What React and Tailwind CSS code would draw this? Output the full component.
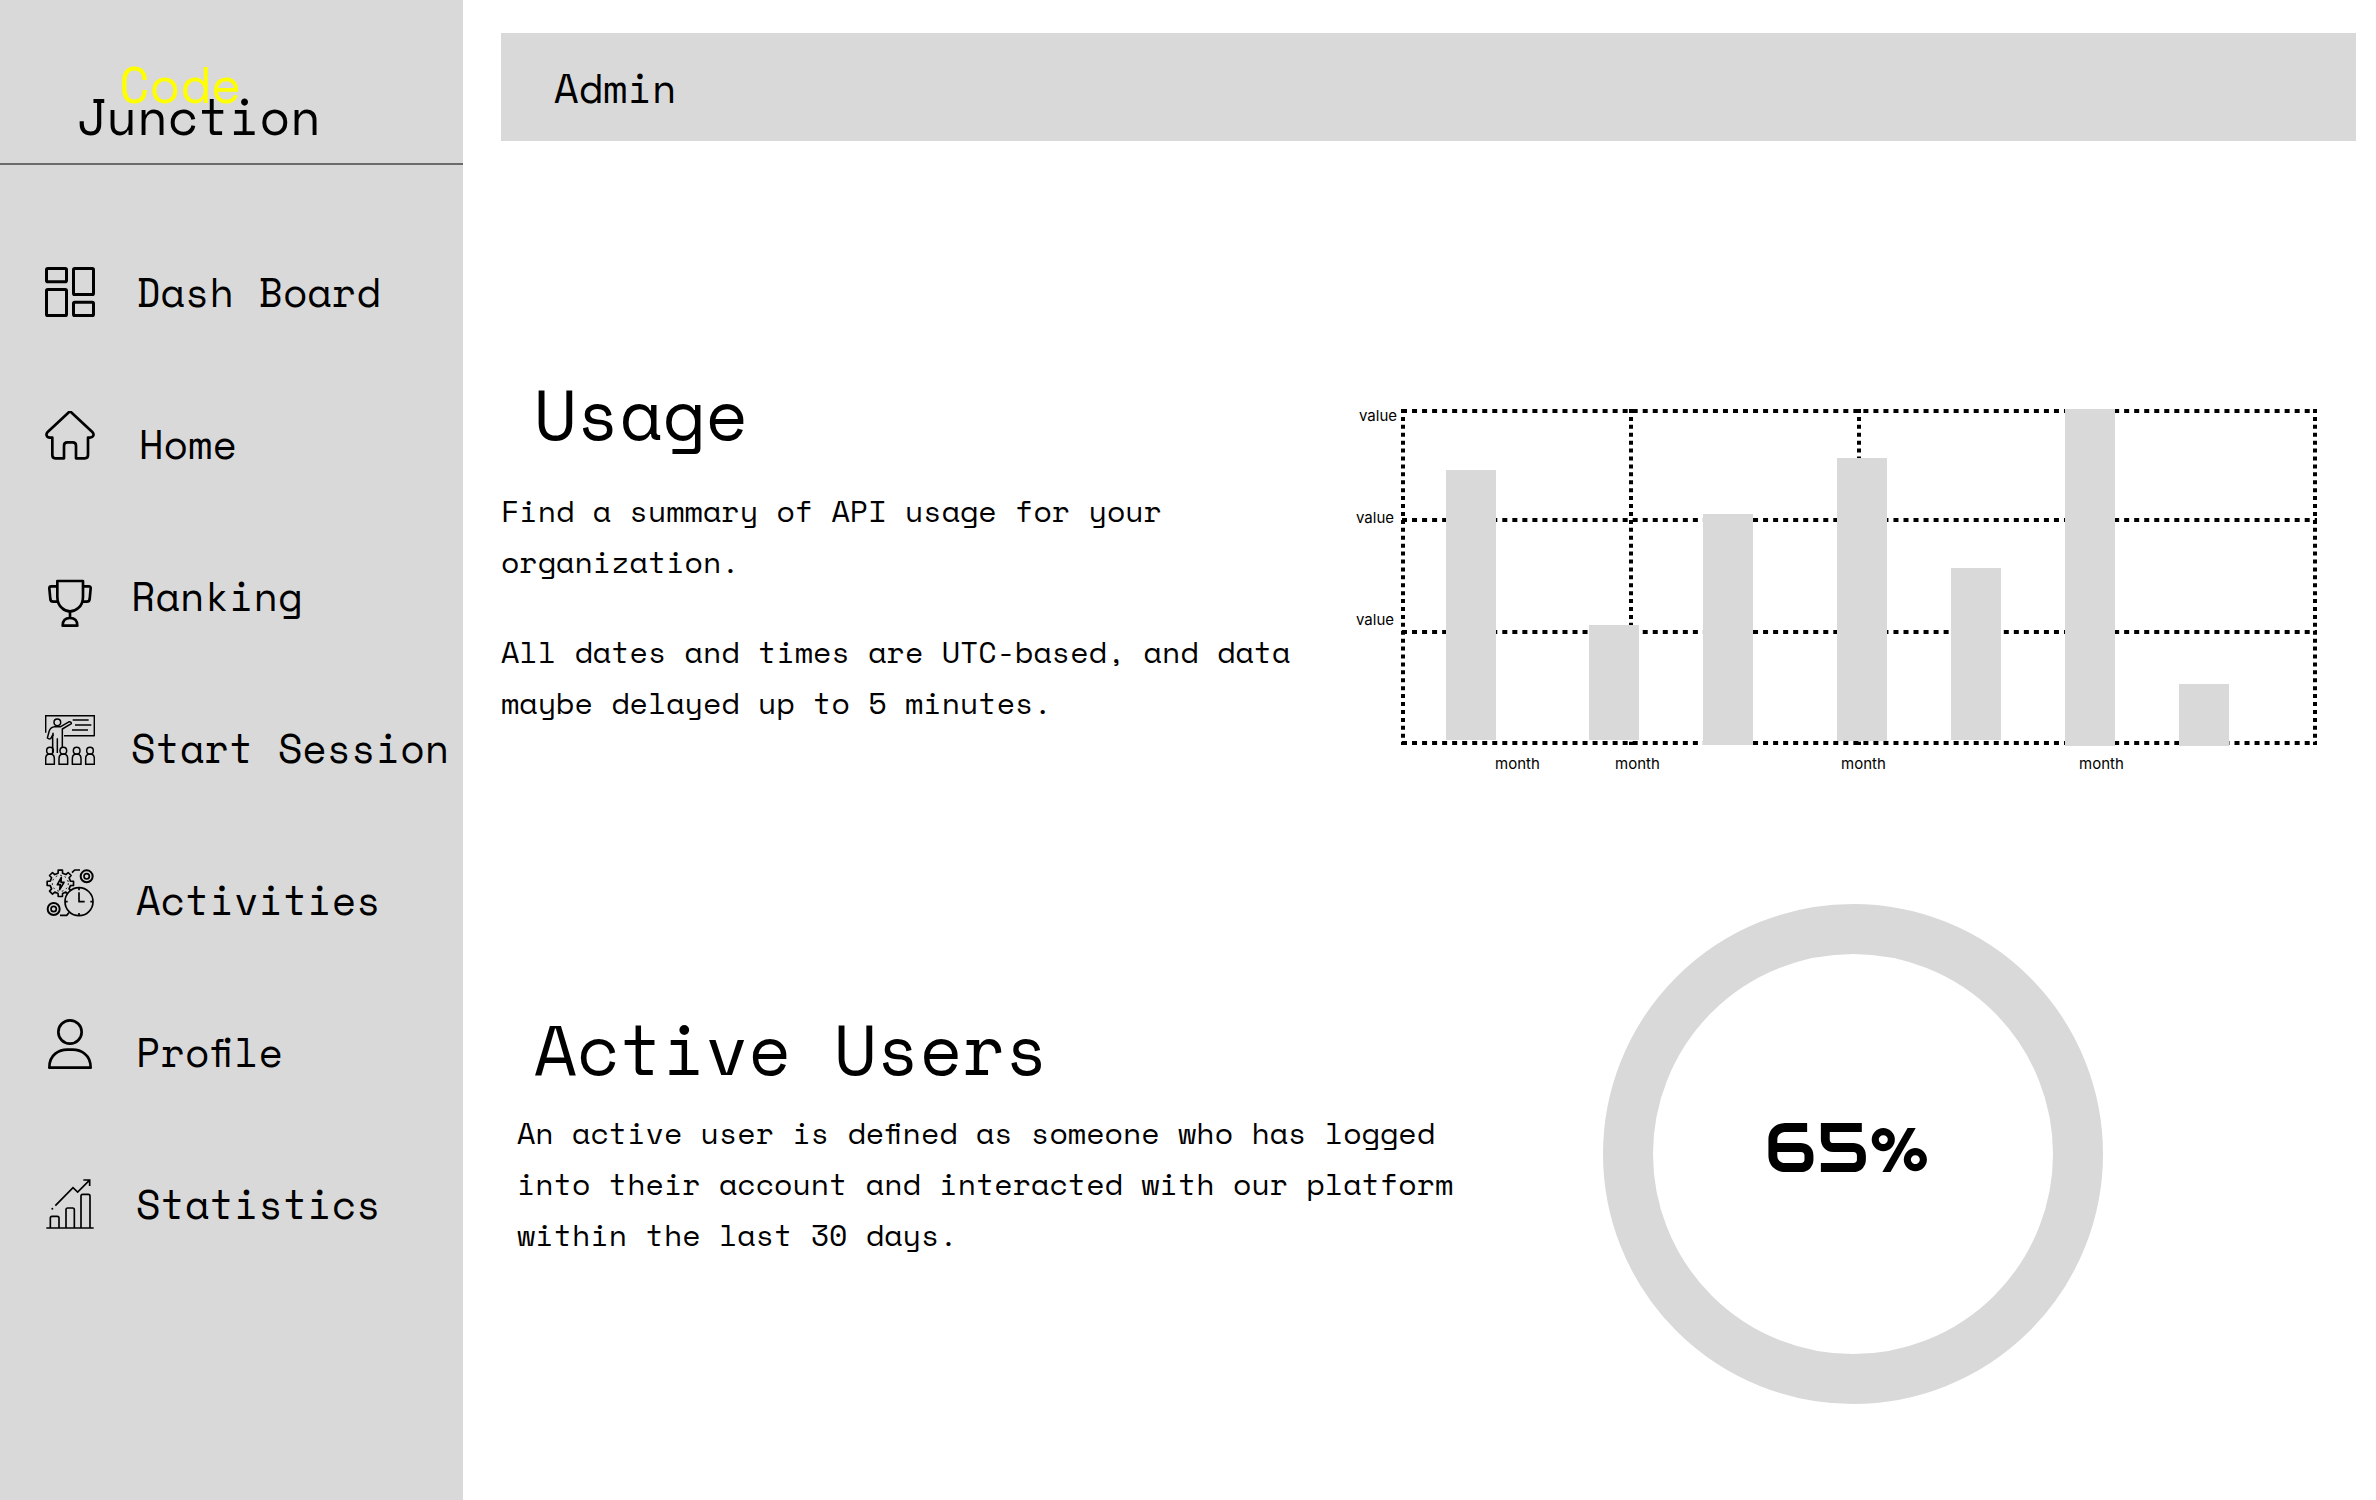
function Icon({ viewBox, strokeWidth, children }) {
  return (
    <svg
      className="size-[50px] shrink-0"
      viewBox={viewBox}
      fill="none"
      stroke="black"
      strokeWidth={strokeWidth}
      strokeLinejoin="round"
      aria-hidden="true"
    >
      {children}
    </svg>
  );
}

function DashboardIcon() {
  return (
    <Icon viewBox="45 60 150 150" strokeWidth="9">
      <rect x="49.5" y="64.5" width="60" height="40" rx="4" />
      <rect x="130.5" y="64.5" width="60" height="78" rx="4" />
      <rect x="49.5" y="127.5" width="60" height="78" rx="4" />
      <rect x="130.5" y="165.5" width="60" height="40" rx="4" />
    </Icon>
  );
}

function HomeIcon() {
  return (
    <Icon viewBox="45 36 150 150" strokeWidth="8">
      <path d="M115 41 Q120 36 125 41 L187 99 Q192 104 190 110 Q187 116 180 116 H174 V168 Q174 178 164 178 H138 V140 Q138 130 128 130 H112 Q102 130 102 140 V178 H76 Q67 178 67 168 V116 H60 Q52 116 50 110 Q48 104 53 99 Z" />
    </Icon>
  );
}

function TrophyIcon() {
  return (
    <Icon viewBox="45 43 150 150" strokeWidth="8">
      <path d="M82 49 H159 V96 Q159 118 145 130 Q134 140 120 140 Q106 140 96 130 Q82 118 82 96 Z" />
      <path d="M82 65 H64 Q58 65 58 71 L61 103 Q62 111 70 111 H85" />
      <path d="M159 65 H176 Q183 65 182 71 L179 103 Q178 111 170 111 H156" />
      <path d="M120 140 V160" />
      <path d="M98 183 Q98 160 120 160 Q142 160 142 183 Z" />
    </Icon>
  );
}

function SessionIcon() {
  return (
    <Icon viewBox="45 45 150 150" strokeWidth="4.5">
      <path d="M47 98 V47 H193 V107 H102" />
      <path d="M128 60 H176 M135 75 H184 M126 90 H174" strokeWidth="5" />
      <circle cx="82" cy="67" r="10" />
      <path d="M68 159 V105 L62 116 Q57 118 52 114 L58 92 Q62 81 74 80 H92 L118 65 Q124 65 124 71 L97 87 V142" />
      <path d="M69 98 V108 M82 115 V159" />
      {[60, 100, 140, 180].map((x) => (
        <g key={x}>
          <circle cx={x} cy="152" r="10" />
          <path
            d={`M${x - 13} 193 V177 Q${x - 13} 165 ${x - 5} 163 H${x + 5} Q${x + 13} 165 ${x + 13} 177 V193 Z`}
          />
        </g>
      ))}
    </Icon>
  );
}

function gearPath(cx, cy, inner, outer, teeth) {
  const points = [];
  const step = (Math.PI * 2) / teeth;
  for (let i = 0; i < teeth; i += 1) {
    const a = i * step - Math.PI / 2;
    [
      [-0.28, inner],
      [-0.2, outer],
      [0.2, outer],
      [0.28, inner],
    ].forEach(([t, r]) => {
      points.push(`${(cx + r * Math.cos(a + t * step)).toFixed(1)} ${(cy + r * Math.sin(a + t * step)).toFixed(1)}`);
    });
  }
  return `M${points.join("L")}Z`;
}

function ActivitiesIcon() {
  return (
    <Icon viewBox="45 39 150 150" strokeWidth="5">
      <path d={gearPath(91, 88, 31, 40, 8)} />
      <path d="M94 70 L82 92 H91 L89 107 L102 85 H93 Z" />
      <circle cx="91" cy="88" r="24" strokeDasharray="5 9" strokeWidth="3" />
      <circle cx="147" cy="143" r="42" fill="#d9d9d9" />
      <path d="M147 115 V143 H164 M147 101 V109 M147 177 V185 M105 143 H113 M181 143 H189" />
      {[
        [170, 67],
        [71, 165],
      ].map(([x, y]) => (
        <g key={x}>
          <circle cx={x} cy={y} r="18" strokeWidth="6" />
          <circle cx={x} cy={y} r="8" />
        </g>
      ))}
      <path d="M126 56 L134 48 H150 M90 184 H110 L117 176" />
    </Icon>
  );
}

function ProfileIcon() {
  return (
    <Icon viewBox="45 48 150 150" strokeWidth="8">
      <circle cx="120" cy="87" r="35" />
      <path d="M58 194 Q58 166 76 152 Q91 140 112 140 H128 Q149 140 164 152 Q182 166 182 194 Z" />
    </Icon>
  );
}

function StatisticsIcon() {
  return (
    <Icon viewBox="45 48 150 150" strokeWidth="5">
      <path d="M49 195 H191" />
      <path d="M61 195 V165 Q61 160 66 160 H82 Q87 160 87 165 V195" />
      <path d="M108 195 V140 Q108 135 113 135 H128 Q133 135 133 140 V195" />
      <path d="M153 195 V99 Q153 94 158 94 H175 Q180 94 180 99 V195" />
      <path d="M76 128 L129 74 L143 87 L178 52 M160 51 H179 V69" strokeLinejoin="miter" />
      <circle cx="67" cy="137" r="3" fill="black" stroke="none" />
    </Icon>
  );
}

const navItems = [
  { label: "Dash Board", icon: DashboardIcon, place: "self-center", gap: "gap-[41px]" },
  { label: "Home", icon: HomeIcon, place: "self-start", gap: "gap-11" },
  { label: "Ranking", icon: TrophyIcon, place: "self-end", gap: "gap-9" },
  { label: "Start Session", icon: SessionIcon, place: "self-start", gap: "gap-9" },
  { label: "Activities", icon: ActivitiesIcon, place: "self-start", gap: "gap-[41px]" },
  { label: "Profile", icon: ProfileIcon, place: "self-start", gap: "gap-[41px]" },
  { label: "Statistics", icon: StatisticsIcon, place: "self-center", gap: "gap-[41px]" },
];

function Sidebar() {
  return (
    <aside className="w-[463px] shrink-0 bg-[#d9d9d9]">
      <div className="h-[165px] border-b-2 border-[#6b6b6b] pt-17 pl-[76px] text-[50px] leading-8">
        <div className="pl-[43px] text-[#ffff00]">Code</div>
        <div>Junction</div>
      </div>
      <nav className="pt-[94px] pl-[45px]">
        <ul className="flex flex-col gap-[86px]">
          {navItems.map(({ label, icon: ItemIcon, place, gap }) => (
            <li key={label}>
              <a href="#" className={`flex h-[66px] items-center text-[40px] whitespace-nowrap ${gap}`}>
                <span className={place}>
                  <ItemIcon />
                </span>
                {label}
              </a>
            </li>
          ))}
        </ul>
      </nav>
    </aside>
  );
}

const bars = [
  { x: 91, top: 65, bottom: 335 },
  { x: 234, top: 220, bottom: 335 },
  { x: 348, top: 109, bottom: 340 },
  { x: 482, top: 53, bottom: 336 },
  { x: 596, top: 163, bottom: 335 },
  { x: 710, top: 4, bottom: 341 },
  { x: 824, top: 279, bottom: 341 },
];

function UsageChart() {
  return (
    <svg viewBox="0 0 965 370" className="w-full" role="img" aria-label="Usage per month">
      <g stroke="black" strokeWidth="4" fill="none">
        {[6, 115, 227, 338].map((y) => (
          <path key={y} d={`M47 ${y}H962`} strokeDasharray="5 5.03" />
        ))}
        {[48, 276, 504, 960].map((x) => (
          <path key={x} d={`M${x} 4V340`} strokeDasharray="4 3.92" />
        ))}
      </g>
      <g fill="#d9d9d9">
        {bars.map(({ x, top, bottom }) => (
          <rect key={x} x={x} y={top} width="50" height={bottom - top} />
        ))}
      </g>
      <g className="font-['Inter',sans-serif] text-[15px]" fill="black">
        <text x="4" y="16">value</text>
        <text x="1" y="118">value</text>
        <text x="1" y="220">value</text>
        <text x="140" y="364">month</text>
        <text x="260" y="364">month</text>
        <text x="486" y="364">month</text>
        <text x="724" y="364">month</text>
      </g>
    </svg>
  );
}

export default function App() {
  return (
    <div className="flex min-h-screen bg-white font-['Space_Mono','Liberation_Mono',monospace] text-black [font-feature-settings:'liga','dlig']">
      <Sidebar />
      <main className="min-w-0 flex-1 pt-[33px] pr-5 pl-[38px]">
        <header className="flex h-[108px] items-center bg-[#d9d9d9] pt-0.5 pl-[53px] text-[40px]">
          Admin
        </header>

        <section className="mt-[237px] grid grid-cols-[854fr_965fr] pr-9">
          <div className="text-[30px] leading-[51px]">
            <h2 className="pl-[33px] text-[70px] leading-[72px]">Usage</h2>
            <p className="mt-[35px]">Find a summary of API usage for your organization.</p>
            <p className="mt-[39px]">
              All dates and times are UTC-based, and data maybe delayed up to 5 minutes.
            </p>
          </div>
          <div className="pt-[27px]">
            <UsageChart />
          </div>
        </section>

        <section className="mt-[129px] flex justify-between pr-[253px] pb-24">
          <div className="max-w-[1000px] pt-[109px] text-[30px] leading-[51px]">
            <h2 className="pl-[33px] text-[70px] leading-[72px]">Active Users</h2>
            <p className="mt-[22px] pl-4">
              An active user is defined as someone who has logged
              <br />
              into their account and interacted with our platform within the last 30 days.
            </p>
          </div>
          <div className="flex size-[500px] shrink-0 items-center justify-center rounded-full border-50 border-[#d9d9d9] pr-3 pb-3 font-['Audiowide','DejaVu_Sans',sans-serif] text-[70px] leading-none">
            65%
          </div>
        </section>
      </main>
    </div>
  );
}
